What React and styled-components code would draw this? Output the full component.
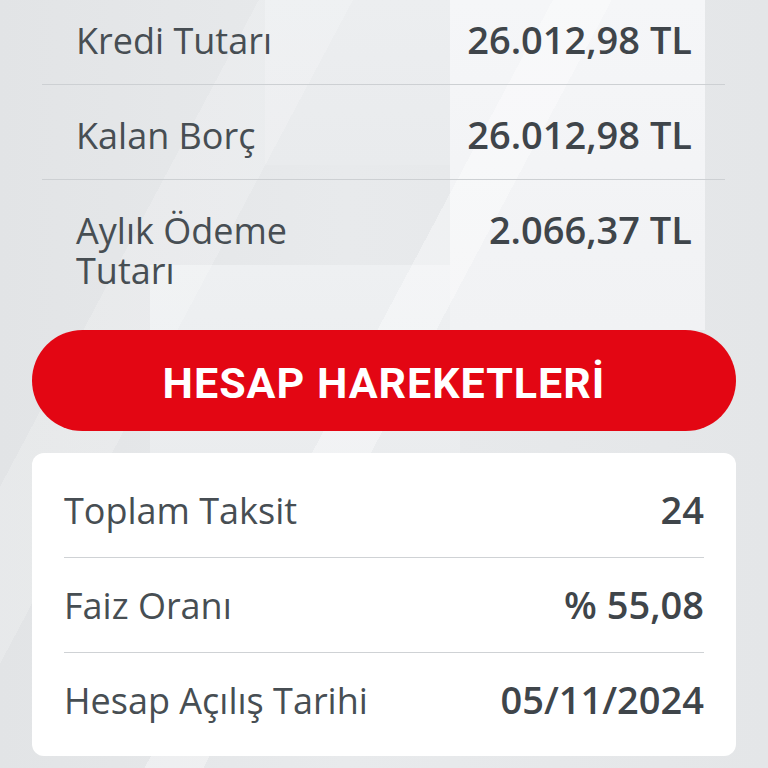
import React from 'react';
import styled, { createGlobalStyle } from 'styled-components';

const GlobalStyle = createGlobalStyle`
    html, body {
        margin: 0;
        padding: 0;
        width: 768px;
        height: 768px;
        overflow: hidden;
    }
    * {
        box-sizing: border-box;
    }
`

const summary = [
    { label: "Kredi Tutarı", value: "26.012,98 TL" },
    { label: "Kalan Borç", value: "26.012,98 TL" },
    { label: "Aylık Ödeme Tutarı", value: "2.066,37 TL" },
];

const details = [
    { label: "Toplam Taksit", value: "24" },
    { label: "Faiz Oranı", value: "% 55,08" },
    { label: "Hesap Açılış Tarihi", value: "05/11/2024" },
];

export default function App() {
    return (
        <>
            <GlobalStyle />
            <Screen>
                <SummaryList>
                    {summary.map((item, i) => (
                        <SummaryRow key={item.label} last={i === summary.length - 1}>
                            <Label wrap>{item.label}</Label>
                            <Value>{item.value}</Value>
                        </SummaryRow>
                    ))}
                </SummaryList>
                <ActionButton>HESAP HAREKETLERİ</ActionButton>
                <DetailCard>
                    {details.map((item, i) => (
                        <DetailRow key={item.label} last={i === details.length - 1}>
                            <Label>{item.label}</Label>
                            <Value>{item.value}</Value>
                        </DetailRow>
                    ))}
                </DetailCard>
            </Screen>
        </>
    )
}

const Screen = styled.main`
    width: 768px;
    height: 768px;
    display: flex;
    flex-direction: column;
    padding: 0 32px;
    overflow: hidden;
    font-family: 'Open Sans', 'Lato', sans-serif;
    color: #434a4f;
    background:
        linear-gradient(118deg, transparent 0 47%, rgba(255,255,255,0.35) 47% 52%, transparent 52%),
        linear-gradient(118deg, transparent 0 22%, rgba(255,255,255,0.18) 22% 30%, transparent 30%),
        linear-gradient(180deg, #f5f6f8, #f1f2f4) 450px 0 / 255px 330px no-repeat,
        linear-gradient(180deg, #eceef0, #e9ebed) 265px 0 / 200px 165px no-repeat,
        linear-gradient(180deg, #eef0f2, #eaecee) 150px 265px / 310px 200px no-repeat,
        linear-gradient(90deg, #e2e4e6 0%, #e8eaec 45%, #e4e6e8 100%);
`
const SummaryList = styled.section`
    display: flex;
    flex-direction: column;
    margin: -10px 11px 0 10px;
`
const SummaryRow = styled.div`
    display: flex;
    justify-content: space-between;
    align-items: baseline;
    padding: 29px 33px 0 34px;
    height: ${p => p.last ? '150px' : '95px'};
    border-bottom: ${p => p.last ? 'none' : '1px solid #cdd0d3'};
`
const Label = styled.span`
    font-size: 36px;
    font-weight: 400;
    line-height: 40px;
    color: #474e53;
    max-width: ${p => p.wrap ? '300px' : 'none'};
    white-space: ${p => p.wrap ? 'normal' : 'nowrap'};
`
const Value = styled.span`
    font-size: 38px;
    font-weight: 600;
    line-height: 40px;
    color: #3f454a;
    white-space: nowrap;
`
const ActionButton = styled.button`
    flex-shrink: 0;
    height: 101px;
    width: 100%;
    border: none;
    border-radius: 51px;
    background: #e30613;
    color: #ffffff;
    font-family: 'Roboto', sans-serif;
    font-weight: 700;
    font-size: 43px;
    letter-spacing: 1px;
    padding-top: 6px;
    display: flex;
    align-items: center;
    justify-content: center;
    cursor: pointer;
`
const DetailCard = styled.section`
    margin-top: 22px;
    background: #ffffff;
    border-radius: 12px;
    padding: 10px 32px 8px;
    display: flex;
    flex-direction: column;
`
const DetailRow = styled.div`
    display: flex;
    justify-content: space-between;
    align-items: baseline;
    padding-top: 26px;
    height: 95px;
    border-bottom: ${p => p.last ? 'none' : '1px solid #cfd2d5'};
`
